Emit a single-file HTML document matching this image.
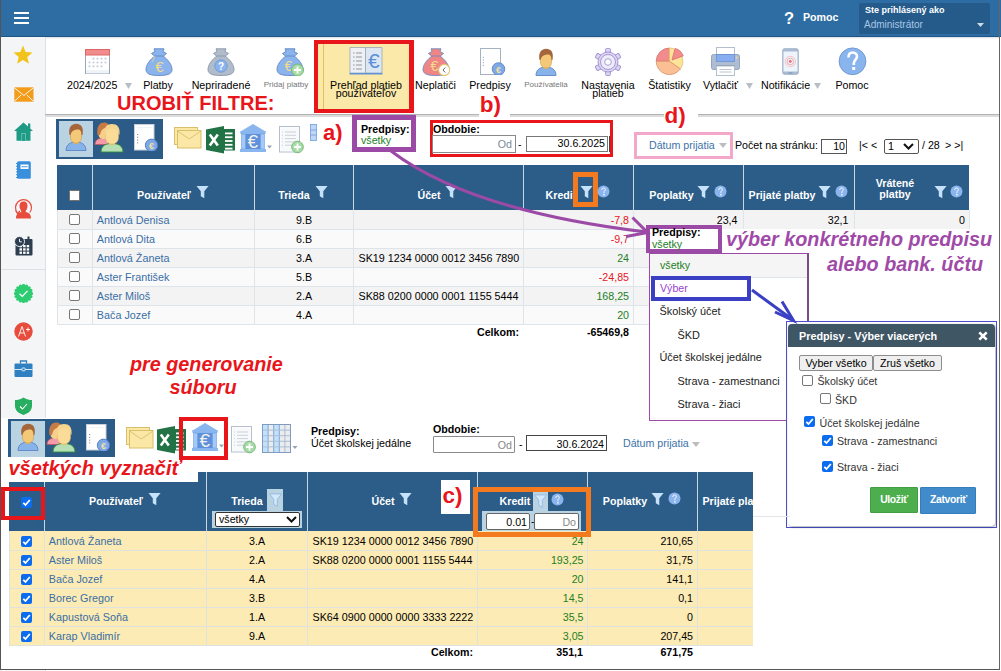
<!DOCTYPE html><html><head><meta charset="utf-8"><style>
html,body{margin:0;padding:0;width:1001px;height:671px;overflow:hidden;background:#fff;position:relative;font-family:"Liberation Sans",sans-serif;}
.t{position:absolute;line-height:1;white-space:nowrap;}
.r{position:absolute;box-sizing:border-box;}
</style></head><body>
<div class="r" style="left:0px;top:0px;width:1001px;height:37px;background:#2d6da3"></div>
<div class="r" style="left:0px;top:36.3px;width:1001px;height:1px;background:#1f5584"></div>
<div class="r" style="left:45px;top:37.3px;width:954px;height:2px;background:linear-gradient(#d8dde3,#fff)"></div>
<div class="r" style="left:13.5px;top:12px;width:15px;height:1.6px;background:#fff"></div>
<div class="r" style="left:13.5px;top:17px;width:15px;height:1.6px;background:#fff"></div>
<div class="r" style="left:13.5px;top:22px;width:15px;height:1.6px;background:#fff"></div>
<div class="t" style="left:784px;top:9.63px;font-size:16.5px;font-weight:bold;color:#fff;font-style:normal;">?</div>
<div class="t" style="left:803px;top:11.97px;font-size:10.67px;font-weight:bold;color:#fff;font-style:normal;">Pomoc</div>
<div class="r" style="left:859px;top:3px;width:131px;height:31px;background:#245b8b;border-radius:2px"></div>
<div class="t" style="left:865px;top:6.38px;font-size:9px;font-weight:bold;color:#fff;font-style:normal;">Ste prihlásený ako</div>
<div class="t" style="left:864px;top:19.54px;font-size:10px;font-weight:normal;color:#a9c6e3;font-style:normal;">Administrátor</div>
<svg class="r" style="left:977px;top:23px" width="7" height="4" viewBox="0 0 7 4"><path d="M0 0L7 0L3.5 4Z" fill="#cfdbe6"/></svg>
<div class="r" style="left:0px;top:37.3px;width:46px;height:634px;background:#f4f5f7;border-right:1px solid #dcdfe3"></div>
<svg class="r" style="left:13px;top:45px" width="20" height="20" viewBox="0 0 20 20"><polygon points="10.00,0.60 12.65,6.96 19.51,7.51 14.28,11.99 15.88,18.69 10.00,15.10 4.12,18.69 5.72,11.99 0.49,7.51 7.35,6.96" fill="#f2c31a"/></svg>
<svg class="r" style="left:13.5px;top:86.5px" width="20" height="15" viewBox="0 0 20 15"><rect x="0.3" y="0.3" width="19.2" height="14.4" fill="#f39c1a"/><path d="M0.5 0.8 L9.9 8.5 L19.3 0.8 M0.5 14.2 L7 8 M19.3 14.2 L12.8 8" stroke="#fff" stroke-width="0.9" fill="none"/></svg>
<svg class="r" style="left:13.5px;top:122px" width="19" height="19" viewBox="0 0 19 19"><path d="M9.5 0.5 L19 9 L16.5 9 L16.5 18.8 L2.5 18.8 L2.5 9 L0 9 Z" fill="#1f9a85"/><rect x="14" y="1.5" width="2.3" height="5" fill="#1f9a85"/><rect x="7.2" y="11" width="4.8" height="7.8" fill="#5fc2b0"/><rect x="8.2" y="12" width="2.8" height="6.8" fill="#1f9a85"/></svg>
<svg class="r" style="left:15.5px;top:160.5px" width="15" height="18" viewBox="0 0 15 18"><rect x="1" y="0.3" width="13.8" height="17.5" rx="1.5" fill="#3a8fdd"/><rect x="4.5" y="3.5" width="8" height="4.5" fill="#fff"/><rect x="5.5" y="5.3" width="6" height="0.9" fill="#3a8fdd"/><rect x="0" y="2.0" width="2" height="1" fill="#3a8fdd"/><rect x="0" y="4.8" width="2" height="1" fill="#3a8fdd"/><rect x="0" y="7.6" width="2" height="1" fill="#3a8fdd"/><rect x="0" y="10.399999999999999" width="2" height="1" fill="#3a8fdd"/><rect x="0" y="13.2" width="2" height="1" fill="#3a8fdd"/><rect x="0" y="16.0" width="2" height="1" fill="#3a8fdd"/></svg>
<svg class="r" style="left:14px;top:197.5px" width="19" height="21" viewBox="0 0 19 21"><path d="M3.2 14.5 A8 8 0 1 1 15.8 14.5" stroke="#e74c3c" stroke-width="1.2" fill="none"/><path d="M1.5 12.5 L3.5 15.5 L6 13" stroke="#e74c3c" stroke-width="1.2" fill="none"/><path d="M9.5 3.5 C12.5 3.5,13.5 5.5,13.5 8 C13.5 10.5,12.3 12,11.7 13 L11.7 14 C15 14.8,17 16,17 20.5 L2 20.5 C2 16,4 14.8,7.3 14 L7.3 13 C6.7 12,5.5 10.5,5.5 8 C5.5 5.5,6.5 3.5,9.5 3.5Z" fill="#e74c3c"/></svg>
<svg class="r" style="left:14px;top:235.5px" width="19" height="20" viewBox="0 0 19 20"><rect x="1.5" y="3" width="17" height="16.5" rx="1" fill="#2c3e50"/><rect x="13.5" y="0.5" width="2" height="4" fill="#2c3e50"/><rect x="5.5" y="9.0" width="2.5" height="2.3" fill="#fff"/><rect x="9.1" y="9.0" width="2.5" height="2.3" fill="#fff"/><rect x="12.7" y="9.0" width="2.5" height="2.3" fill="#fff"/><rect x="5.5" y="12.3" width="2.5" height="2.3" fill="#fff"/><rect x="9.1" y="12.3" width="2.5" height="2.3" fill="#fff"/><rect x="12.7" y="12.3" width="2.5" height="2.3" fill="#fff"/><rect x="5.5" y="15.6" width="2.5" height="2.3" fill="#fff"/><rect x="9.1" y="15.6" width="2.5" height="2.3" fill="#fff"/><rect x="12.7" y="15.6" width="2.5" height="2.3" fill="#fff"/><circle cx="5.5" cy="5.5" r="5" fill="#2c3e50" stroke="#fff" stroke-width="0.9"/><path d="M5.5 2.8V5.8H7.8" stroke="#fff" stroke-width="0.9" fill="none"/></svg>
<svg class="r" style="left:13.5px;top:283.5px" width="19" height="19" viewBox="0 0 19 19"><circle cx="17.5" cy="9.5" r="1.6" fill="#2ecc71"/><circle cx="16.891036260090296" cy="12.561467458920719" r="1.6" fill="#2ecc71"/><circle cx="15.15685424949238" cy="15.15685424949238" r="1.6" fill="#2ecc71"/><circle cx="12.561467458920719" cy="16.891036260090296" r="1.6" fill="#2ecc71"/><circle cx="9.5" cy="17.5" r="1.6" fill="#2ecc71"/><circle cx="6.438532541079282" cy="16.891036260090296" r="1.6" fill="#2ecc71"/><circle cx="3.8431457505076203" cy="15.15685424949238" r="1.6" fill="#2ecc71"/><circle cx="2.108963739909706" cy="12.561467458920719" r="1.6" fill="#2ecc71"/><circle cx="1.5" cy="9.500000000000002" r="1.6" fill="#2ecc71"/><circle cx="2.108963739909705" cy="6.438532541079283" r="1.6" fill="#2ecc71"/><circle cx="3.8431457505076185" cy="3.8431457505076203" r="1.6" fill="#2ecc71"/><circle cx="6.438532541079278" cy="2.108963739909708" r="1.6" fill="#2ecc71"/><circle cx="9.499999999999998" cy="1.5" r="1.6" fill="#2ecc71"/><circle cx="12.56146745892072" cy="2.108963739909707" r="1.6" fill="#2ecc71"/><circle cx="15.15685424949238" cy="3.8431457505076185" r="1.6" fill="#2ecc71"/><circle cx="16.891036260090292" cy="6.438532541079277" r="1.6" fill="#2ecc71"/><circle cx="9.5" cy="9.5" r="8.3" fill="#2ecc71"/><path d="M5.5 9.8 L8.3 12.5 L13.5 6.8" stroke="#fff" stroke-width="1.2" fill="none"/></svg>
<svg class="r" style="left:13.5px;top:321.5px" width="19" height="19" viewBox="0 0 19 19"><circle cx="9.5" cy="9.5" r="9.2" fill="#e74c3c"/><path d="M4.5 14.5 L8 4.5 L11.5 14.5 M5.8 11 H10.2 M12 7.5H16 M14 5.5V9.5" stroke="#fff" stroke-width="0.9" fill="none"/></svg>
<svg class="r" style="left:13.5px;top:360px" width="19" height="18" viewBox="0 0 19 18"><rect x="0.5" y="3.5" width="18" height="13.5" rx="1" fill="#2f80c0"/><path d="M6.5 3.5 V1 H12.5 V3.5" stroke="#2f80c0" stroke-width="1.3" fill="none"/><path d="M0.5 9.5H18.5" stroke="#fff" stroke-width="0.8"/><rect x="7.8" y="8" width="3.4" height="2.8" rx="0.8" fill="#2f80c0" stroke="#fff" stroke-width="0.8"/></svg>
<svg class="r" style="left:14.5px;top:397px" width="18" height="18" viewBox="0 0 18 18"><path d="M8.5 0.5 C11.5 2.5,14.5 3,17 3 L17 9 C17 13.5,13 16.5,8.5 18 C4 16.5,0 13.5,0 9 L0 3 C2.5 3,5.5 2.5,8.5 0.5Z" fill="#27ae60"/><path d="M5 9.5 L7.5 12 L12 7" stroke="#fff" stroke-width="1.1" fill="none"/></svg>
<div class="r" style="left:0px;top:268.5px;width:45px;height:1px;background:#dde0e4"></div>
<div class="r" style="left:45px;top:113.8px;width:954px;height:1.6px;background:#b4b4b4"></div>
<div class="r" style="left:45px;top:115.4px;width:954px;height:1.6px;background:#dcdcdc"></div>
<div class="t" style="left:67px;top:79.97px;font-size:10.67px;font-weight:normal;color:#000;font-style:normal;">2024/2025</div>
<svg class="r" style="left:125px;top:83px" width="8" height="6" viewBox="0 0 8 6"><path d="M0 0L7 0L3.5 6Z" fill="#b8bec6"/></svg>
<div class="t" style="left:-42px;width:400px;text-align:center;top:79.97px;font-size:10.67px;font-weight:normal;color:#000;font-style:normal;">Platby</div>
<div class="t" style="left:21px;width:400px;text-align:center;top:79.97px;font-size:10.67px;font-weight:normal;color:#000;font-style:normal;">Nepriradené</div>
<div class="t" style="left:86px;width:400px;text-align:center;top:81.14px;font-size:8.1px;font-weight:normal;color:#777;font-style:normal;">Pridaj platby</div>
<div class="r" style="left:314px;top:40px;width:100px;height:73px;border:4px solid #e8151b;border-right-width:5px;background:#fbe9a9"></div>
<div class="r" style="left:323px;top:44px;width:1px;height:65px;background:#e6c15a"></div>
<div class="t" style="left:166px;width:400px;text-align:center;top:79.57px;font-size:10.67px;font-weight:normal;color:#000;font-style:normal;">Prehľad platieb</div>
<div class="t" style="left:166px;width:400px;text-align:center;top:87.77px;font-size:10.67px;font-weight:normal;color:#000;font-style:normal;">používateľov</div>
<div class="t" style="left:235.5px;width:400px;text-align:center;top:79.97px;font-size:10.67px;font-weight:normal;color:#000;font-style:normal;">Neplatiči</div>
<div class="t" style="left:290px;width:400px;text-align:center;top:79.97px;font-size:10.67px;font-weight:normal;color:#000;font-style:normal;">Predpisy</div>
<div class="t" style="left:346px;width:400px;text-align:center;top:81.23px;font-size:8px;font-weight:normal;color:#777;font-style:normal;">Používatelia</div>
<div class="t" style="left:408px;width:400px;text-align:center;top:79.57px;font-size:10.67px;font-weight:normal;color:#000;font-style:normal;">Nastavenia</div>
<div class="t" style="left:408px;width:400px;text-align:center;top:87.77px;font-size:10.67px;font-weight:normal;color:#000;font-style:normal;">platieb</div>
<div class="t" style="left:469.5px;width:400px;text-align:center;top:79.77px;font-size:10.67px;font-weight:normal;color:#000;font-style:normal;">Štatistiky</div>
<div class="t" style="left:703px;top:79.97px;font-size:10.67px;font-weight:normal;color:#000;font-style:normal;">Vytlačiť</div>
<svg class="r" style="left:746px;top:83px" width="7" height="6" viewBox="0 0 7 6"><path d="M0 0L7 0L3.5 6Z" fill="#b8bec6"/></svg>
<div class="t" style="left:761px;top:79.97px;font-size:10.67px;font-weight:normal;color:#000;font-style:normal;">Notifikácie</div>
<svg class="r" style="left:814px;top:83px" width="7" height="6" viewBox="0 0 7 6"><path d="M0 0L7 0L3.5 6Z" fill="#b8bec6"/></svg>
<div class="t" style="left:652px;width:400px;text-align:center;top:79.97px;font-size:10.67px;font-weight:normal;color:#000;font-style:normal;">Pomoc</div>
<div class="t" style="left:117px;top:93.07px;font-size:20px;font-weight:bold;color:#e8151b;font-style:normal;">UROBIŤ FILTRE:</div>
<div class="r" style="left:478.5px;top:94px;width:31.5px;height:23px;background:#fff"></div>
<div class="t" style="left:479.8px;top:93.75px;font-size:22.5px;font-weight:bold;color:#e8151b;font-style:normal;">b)</div>
<div class="r" style="left:663.5px;top:104px;width:34.5px;height:13px;background:#fff"></div>
<div class="t" style="left:664.5px;top:104.65px;font-size:22.5px;font-weight:bold;color:#e8151b;font-style:normal;">d)</div>
<div class="t" style="left:323px;top:122.38px;font-size:22px;font-weight:bold;color:#e8151b;font-style:normal;">a)</div>
<div class="r" style="left:56px;top:119px;width:107px;height:40px;background:#2b5b86"></div>
<div class="r" style="left:59px;top:121px;width:34px;height:36px;background:#b9d3e3"></div>
<div class="r" style="left:352px;top:115px;width:64px;height:37px;border:5px solid #9b4aa6;background:#fff"></div>
<div class="t" style="left:361px;top:123.67px;font-size:10.67px;font-weight:bold;color:#000;font-style:normal;">Predpisy:</div>
<div class="t" style="left:361px;top:134.97px;font-size:10.67px;font-weight:normal;color:#22801f;font-style:normal;">všetky</div>
<div class="r" style="left:430px;top:120px;width:183px;height:37px;border:3px solid #e8151b"></div>
<div class="t" style="left:433px;top:123.97px;font-size:10.67px;font-weight:bold;color:#000;font-style:normal;">Obdobie:</div>
<div class="r" style="left:432px;top:135px;width:84px;height:18px;border:1px solid #8a8a8a;background:#fff"></div>
<div class="t" style="left:112px;width:400px;text-align:right;top:138.97px;font-size:10.67px;font-weight:normal;color:#7b8a99;font-style:normal;">Od</div>
<div class="t" style="left:518px;top:138.97px;font-size:10.67px;font-weight:normal;color:#000;font-style:normal;">-</div>
<div class="r" style="left:526px;top:136px;width:82px;height:16px;border:1px solid #777;background:#fff"></div>
<div class="r" style="left:608.5px;top:136px;width:1.5px;height:16px;background:#444"></div>
<div class="t" style="left:205px;width:400px;text-align:right;top:138.47px;font-size:10.67px;font-weight:normal;color:#000;font-style:normal;">30.6.2025</div>
<div class="r" style="left:634px;top:132px;width:99px;height:27px;border:3px solid #f3a7c9"></div>
<div class="t" style="left:649px;top:140.47px;font-size:10.67px;font-weight:normal;color:#3e72a8;font-style:normal;">Dátum prijatia</div>
<svg class="r" style="left:719px;top:143px" width="8" height="5" viewBox="0 0 8 5"><path d="M0 0L8 0L4 5Z" fill="#bdbdbd"/></svg>
<div class="t" style="left:735px;top:140.47px;font-size:10.67px;font-weight:normal;color:#000;font-style:normal;">Počet na stránku:</div>
<div class="r" style="left:821px;top:139px;width:26px;height:15px;border:1px solid #555;background:#fff"></div>
<div class="t" style="left:445px;width:400px;text-align:right;top:140.97px;font-size:10.67px;font-weight:normal;color:#000;font-style:normal;">10</div>
<div class="t" style="left:859px;top:140.47px;font-size:10.67px;font-weight:normal;color:#000;font-style:normal;">|&lt; &lt;</div>
<div class="r" style="left:884px;top:139px;width:35px;height:15px;border:1px solid #555;background:#fff;border-radius:2px"></div>
<div class="t" style="left:888px;top:140.97px;font-size:10.67px;font-weight:normal;color:#000;font-style:normal;">1</div>
<svg class="r" style="left:903px;top:143px" width="11" height="7" viewBox="0 0 11 7"><path d="M1 1L5.5 5.5L10 1" stroke="#111" stroke-width="2" fill="none"/></svg>
<div class="t" style="left:922px;top:140.47px;font-size:10.67px;font-weight:normal;color:#000;font-style:normal;">/ 28</div>
<div class="t" style="left:945px;top:140.47px;font-size:10.67px;font-weight:normal;color:#000;font-style:normal;">&gt; &gt;|</div>
<div class="r" style="left:57px;top:165px;width:912px;height:45px;background:#2c5d88"></div>
<div class="r" style="left:92px;top:165px;width:1px;height:45px;background:#c9d6e2"></div>
<div class="r" style="left:254px;top:165px;width:1px;height:45px;background:#c9d6e2"></div>
<div class="r" style="left:353px;top:165px;width:1px;height:45px;background:#c9d6e2"></div>
<div class="r" style="left:523px;top:165px;width:1px;height:45px;background:#c9d6e2"></div>
<div class="r" style="left:633px;top:165px;width:1px;height:45px;background:#c9d6e2"></div>
<div class="r" style="left:743px;top:165px;width:1px;height:45px;background:#c9d6e2"></div>
<div class="r" style="left:854px;top:165px;width:1px;height:45px;background:#c9d6e2"></div>
<div class="r" style="left:57px;top:210px;width:912px;height:19px;background:#f3f3f3"></div>
<div class="r" style="left:57px;top:229px;width:912px;height:19px;background:#fafafa"></div>
<div class="r" style="left:57px;top:248px;width:912px;height:19px;background:#f3f3f3"></div>
<div class="r" style="left:57px;top:267px;width:912px;height:19px;background:#fafafa"></div>
<div class="r" style="left:57px;top:286px;width:912px;height:19px;background:#f3f3f3"></div>
<div class="r" style="left:57px;top:305px;width:912px;height:19px;background:#fafafa"></div>
<div class="r" style="left:57px;top:229px;width:912px;height:1px;background:#dde5eb"></div>
<div class="r" style="left:57px;top:248px;width:912px;height:1px;background:#dde5eb"></div>
<div class="r" style="left:57px;top:267px;width:912px;height:1px;background:#dde5eb"></div>
<div class="r" style="left:57px;top:286px;width:912px;height:1px;background:#dde5eb"></div>
<div class="r" style="left:57px;top:305px;width:912px;height:1px;background:#dde5eb"></div>
<div class="r" style="left:57px;top:324px;width:912px;height:1px;background:#dde5eb"></div>
<div class="r" style="left:57px;top:210px;width:1px;height:114px;background:#dde5eb"></div>
<div class="r" style="left:92px;top:210px;width:1px;height:114px;background:#dde5eb"></div>
<div class="r" style="left:254px;top:210px;width:1px;height:114px;background:#dde5eb"></div>
<div class="r" style="left:353px;top:210px;width:1px;height:114px;background:#dde5eb"></div>
<div class="r" style="left:523px;top:210px;width:1px;height:114px;background:#dde5eb"></div>
<div class="r" style="left:633px;top:210px;width:1px;height:114px;background:#dde5eb"></div>
<div class="r" style="left:743px;top:210px;width:1px;height:114px;background:#dde5eb"></div>
<div class="r" style="left:854px;top:210px;width:1px;height:114px;background:#dde5eb"></div>
<div class="r" style="left:969px;top:210px;width:1px;height:114px;background:#dde5eb"></div>
<div class="r" style="left:69.4px;top:190.3px;width:10.4px;height:10.5px;background:#fff;border:1px solid #7a716a;border-radius:1.5px"></div>
<div class="t" style="left:-36px;width:400px;text-align:center;top:189.97px;font-size:10.67px;font-weight:bold;color:#fff;font-style:normal;">Používateľ</div>
<div class="t" style="left:94px;width:400px;text-align:center;top:189.97px;font-size:10.67px;font-weight:bold;color:#fff;font-style:normal;">Trieda</div>
<div class="t" style="left:229px;width:400px;text-align:center;top:189.97px;font-size:10.67px;font-weight:bold;color:#fff;font-style:normal;">Účet</div>
<div class="t" style="left:361px;width:400px;text-align:center;top:189.97px;font-size:10.67px;font-weight:bold;color:#fff;font-style:normal;">Kredit</div>
<div class="t" style="left:471.5px;width:400px;text-align:center;top:189.97px;font-size:10.67px;font-weight:bold;color:#fff;font-style:normal;">Poplatky</div>
<div class="t" style="left:582px;width:400px;text-align:center;top:189.97px;font-size:10.67px;font-weight:bold;color:#fff;font-style:normal;">Prijaté platby</div>
<div class="t" style="left:695px;width:400px;text-align:center;top:177.97px;font-size:10.67px;font-weight:bold;color:#fff;font-style:normal;">Vrátené</div>
<div class="t" style="left:695px;width:400px;text-align:center;top:189.47px;font-size:10.67px;font-weight:bold;color:#fff;font-style:normal;">platby</div>
<div class="r" style="left:573px;top:172px;width:25px;height:34.6px;border:5px solid #f47a20"></div>
<div class="r" style="left:69px;top:214px;width:11px;height:11px;border:1px solid #777;border-radius:2px;background:#fff"></div>
<div class="t" style="left:96.8px;top:214.86px;font-size:10.8px;font-weight:normal;color:#3a6ea5;font-style:normal;">Antlová Denisa</div>
<div class="t" style="left:104px;width:400px;text-align:center;top:214.97px;font-size:10.67px;font-weight:normal;color:#000;font-style:normal;">9.B</div>
<div class="t" style="left:229px;width:400px;text-align:right;top:214.97px;font-size:10.67px;font-weight:normal;color:#e8151b;font-style:normal;">-7,8</div>
<div class="r" style="left:69px;top:233px;width:11px;height:11px;border:1px solid #777;border-radius:2px;background:#fff"></div>
<div class="t" style="left:96.8px;top:233.86px;font-size:10.8px;font-weight:normal;color:#3a6ea5;font-style:normal;">Antlová Dita</div>
<div class="t" style="left:104px;width:400px;text-align:center;top:233.97px;font-size:10.67px;font-weight:normal;color:#000;font-style:normal;">6.B</div>
<div class="t" style="left:229px;width:400px;text-align:right;top:233.97px;font-size:10.67px;font-weight:normal;color:#e8151b;font-style:normal;">-9,7</div>
<div class="r" style="left:69px;top:252px;width:11px;height:11px;border:1px solid #777;border-radius:2px;background:#fff"></div>
<div class="t" style="left:96.8px;top:252.86px;font-size:10.8px;font-weight:normal;color:#3a6ea5;font-style:normal;">Antlová Žaneta</div>
<div class="t" style="left:104px;width:400px;text-align:center;top:252.97px;font-size:10.67px;font-weight:normal;color:#000;font-style:normal;">3.A</div>
<div class="t" style="left:358.5px;top:252.89px;font-size:10.76px;font-weight:normal;color:#000;font-style:normal;">SK19 1234 0000 0012 3456 7890</div>
<div class="t" style="left:229px;width:400px;text-align:right;top:252.97px;font-size:10.67px;font-weight:normal;color:#22801f;font-style:normal;">24</div>
<div class="r" style="left:69px;top:271px;width:11px;height:11px;border:1px solid #777;border-radius:2px;background:#fff"></div>
<div class="t" style="left:96.8px;top:271.86px;font-size:10.8px;font-weight:normal;color:#3a6ea5;font-style:normal;">Aster František</div>
<div class="t" style="left:104px;width:400px;text-align:center;top:271.97px;font-size:10.67px;font-weight:normal;color:#000;font-style:normal;">5.B</div>
<div class="t" style="left:229px;width:400px;text-align:right;top:271.97px;font-size:10.67px;font-weight:normal;color:#e8151b;font-style:normal;">-24,85</div>
<div class="r" style="left:69px;top:290px;width:11px;height:11px;border:1px solid #777;border-radius:2px;background:#fff"></div>
<div class="t" style="left:96.8px;top:290.86px;font-size:10.8px;font-weight:normal;color:#3a6ea5;font-style:normal;">Aster Miloš</div>
<div class="t" style="left:104px;width:400px;text-align:center;top:290.97px;font-size:10.67px;font-weight:normal;color:#000;font-style:normal;">2.A</div>
<div class="t" style="left:358.5px;top:290.89px;font-size:10.76px;font-weight:normal;color:#000;font-style:normal;">SK88 0200 0000 0001 1155 5444</div>
<div class="t" style="left:229px;width:400px;text-align:right;top:290.97px;font-size:10.67px;font-weight:normal;color:#22801f;font-style:normal;">168,25</div>
<div class="r" style="left:69px;top:309px;width:11px;height:11px;border:1px solid #777;border-radius:2px;background:#fff"></div>
<div class="t" style="left:96.8px;top:309.86px;font-size:10.8px;font-weight:normal;color:#3a6ea5;font-style:normal;">Bača Jozef</div>
<div class="t" style="left:104px;width:400px;text-align:center;top:309.97px;font-size:10.67px;font-weight:normal;color:#000;font-style:normal;">4.A</div>
<div class="t" style="left:229px;width:400px;text-align:right;top:309.97px;font-size:10.67px;font-weight:normal;color:#22801f;font-style:normal;">20</div>
<div class="t" style="left:337.5px;width:400px;text-align:right;top:214.97px;font-size:10.67px;font-weight:normal;color:#000;font-style:normal;">23,4</div>
<div class="t" style="left:448.5px;width:400px;text-align:right;top:214.97px;font-size:10.67px;font-weight:normal;color:#000;font-style:normal;">32,1</div>
<div class="t" style="left:565px;width:400px;text-align:right;top:214.97px;font-size:10.67px;font-weight:normal;color:#000;font-style:normal;">0</div>
<div class="t" style="left:119px;width:400px;text-align:right;top:326.97px;font-size:10.67px;font-weight:bold;color:#000;font-style:normal;">Celkom:</div>
<div class="t" style="left:229px;width:400px;text-align:right;top:326.97px;font-size:10.67px;font-weight:bold;color:#000;font-style:normal;">-65469,8</div>
<svg class="r" style="left:85px;top:49px" width="25" height="25" viewBox="0 0 25 25"><rect x="0.5" y="0.5" width="24" height="24" fill="#fff" stroke="#98a8b8"/><rect x="0.5" y="0.5" width="24" height="5.5" fill="#f28b8b" stroke="#d66"/><rect x="1" y="21" width="23" height="3.5" fill="#eef3f8"/><circle cx="8.5" cy="9.7" r="1.1" fill="#c5d0dc"/><circle cx="12.5" cy="9.7" r="1.1" fill="#c5d0dc"/><circle cx="16.5" cy="9.7" r="1.1" fill="#c5d0dc"/><circle cx="20.5" cy="9.7" r="1.1" fill="#c5d0dc"/><circle cx="4.5" cy="13.5" r="1.1" fill="#c5d0dc"/><circle cx="8.5" cy="13.5" r="1.1" fill="#c5d0dc"/><circle cx="12.5" cy="13.5" r="1.1" fill="#c5d0dc"/><circle cx="16.5" cy="13.5" r="1.1" fill="#c5d0dc"/><circle cx="20.5" cy="13.5" r="1.1" fill="#c5d0dc"/><circle cx="4.5" cy="17.299999999999997" r="1.1" fill="#c5d0dc"/><circle cx="8.5" cy="17.299999999999997" r="1.1" fill="#c5d0dc"/><circle cx="12.5" cy="17.299999999999997" r="1.1" fill="#c5d0dc"/><circle cx="16.5" cy="17.299999999999997" r="1.1" fill="#c5d0dc"/></svg>
<svg class="r" style="left:144.5px;top:47.5px" width="28" height="28" viewBox="0 0 28 28"><path d="M10.5 7.5 C4.5 12,0.8 17,1 22 C1.3 26.5,7 27.5,14 27.5 C21 27.5,26.7 26.5,27 22 C27.2 17,23.5 12,17.5 7.5 Z" fill="#8cb4ec" stroke="#5f86c4" stroke-width="0.9"/><path d="M9 0.8 L19 0.8 L18 3.5 L21.5 5.5 L18.5 8 L9.5 8 L6.5 5.5 L10 3.5 Z" fill="#8cb4ec" stroke="#5f86c4" stroke-width="0.9"/><text x="14.3" y="23.5" font-family="Liberation Sans" font-size="15" font-weight="normal" fill="#f5dc8a" text-anchor="middle">€</text><path d="M10 8 L7 14" stroke="#e8d49a" stroke-width="0.8"/></svg>
<svg class="r" style="left:206.5px;top:47.5px" width="28" height="28" viewBox="0 0 28 28"><path d="M10.5 7.5 C4.5 12,0.8 17,1 22 C1.3 26.5,7 27.5,14 27.5 C21 27.5,26.7 26.5,27 22 C27.2 17,23.5 12,17.5 7.5 Z" fill="#b1bccb" stroke="#8796ab" stroke-width="0.9"/><path d="M9 0.8 L19 0.8 L18 3.5 L21.5 5.5 L18.5 8 L9.5 8 L6.5 5.5 L10 3.5 Z" fill="#b1bccb" stroke="#8796ab" stroke-width="0.9"/><circle cx="14" cy="18" r="6.2" fill="#8ab4ed" stroke="#6b95d3" stroke-width="0.8"/><text x="14" y="22" font-family="Liberation Sans" font-size="10" font-weight="bold" fill="#fff" text-anchor="middle">?</text></svg>
<svg class="r" style="left:276px;top:47.5px" width="28" height="28" viewBox="0 0 28 28"><path d="M10.5 7.5 C4.5 12,0.8 17,1 22 C1.3 26.5,7 27.5,14 27.5 C21 27.5,26.7 26.5,27 22 C27.2 17,23.5 12,17.5 7.5 Z" fill="#8cb4ec" stroke="#5f86c4" stroke-width="0.9"/><path d="M9 0.8 L19 0.8 L18 3.5 L21.5 5.5 L18.5 8 L9.5 8 L6.5 5.5 L10 3.5 Z" fill="#8cb4ec" stroke="#5f86c4" stroke-width="0.9"/><text x="12.5" y="23" font-family="Liberation Sans" font-size="14" font-weight="normal" fill="#f5dc8a" text-anchor="middle">€</text><circle cx="21.5" cy="22" r="6" fill="#a8dba8" stroke="#6db46d" stroke-width="0.9"/><path d="M21.5 18.5V25.5M18 22H25" stroke="#fff" stroke-width="1.8"/></svg>
<svg class="r" style="left:349px;top:47px" width="34" height="28" viewBox="0 0 34 28"><path d="M1 0.5 H16.5 V26 H1 Z" fill="#eef0f3" stroke="#9aa7b6" stroke-width="0.8"/><path d="M16.5 0.5 H33 V26 H16.5 Z" fill="#dce7f4" stroke="#9aa7b6" stroke-width="0.8"/><path d="M0.5 26 H33.5 V27.5 H0.5Z" fill="#5f93d8"/><path d="M4 6 H5.5 M7 6 H13" stroke="#8d98a6" stroke-width="1"/><path d="M4 10 H5.5 M7 10 H13" stroke="#8d98a6" stroke-width="1"/><path d="M4 14 H5.5 M7 14 H13" stroke="#8d98a6" stroke-width="1"/><path d="M4 18 H5.5 M7 18 H13" stroke="#8d98a6" stroke-width="1"/><path d="M4 22 H5.5 M7 22 H13" stroke="#8d98a6" stroke-width="1"/><text x="24.8" y="21.3" font-family="Liberation Sans" font-size="21" font-weight="normal" fill="#5b8fd6" text-anchor="middle">€</text></svg>
<svg class="r" style="left:421.5px;top:47.5px" width="28" height="28" viewBox="0 0 28 28"><path d="M10.5 7.5 C4.5 12,0.8 17,1 22 C1.3 26.5,7 27.5,14 27.5 C21 27.5,26.7 26.5,27 22 C27.2 17,23.5 12,17.5 7.5 Z" fill="#f08585" stroke="#6e8cc0" stroke-width="0.9"/><path d="M9 0.8 L19 0.8 L18 3.5 L21.5 5.5 L18.5 8 L9.5 8 L6.5 5.5 L10 3.5 Z" fill="#f08585" stroke="#6e8cc0" stroke-width="0.9"/><text x="12.5" y="23" font-family="Liberation Sans" font-size="14" font-weight="normal" fill="#f5dc8a" text-anchor="middle">€</text><circle cx="22.2" cy="22" r="5.6" fill="#fff" stroke="#e3c46a" stroke-width="1.1"/><path d="M23.3 19.5 L21 22 L23.3 24.5" stroke="#555" stroke-width="0.9" fill="none"/></svg>
<svg class="r" style="left:480px;top:48px" width="26" height="27" viewBox="0 0 26 27"><rect x="0.5" y="0.5" width="20" height="26" fill="#fff" stroke="#a4b2c1"/><rect x="2.8" y="8.8" width="1" height="1" fill="#8895a5"/><rect x="2.8" y="11.5" width="1" height="1" fill="#8895a5"/><rect x="2.8" y="14.200000000000001" width="1" height="1" fill="#8895a5"/><rect x="2.8" y="16.900000000000002" width="1" height="1" fill="#8895a5"/><circle cx="18.5" cy="21" r="6.3" fill="#7fa9e6" stroke="#5f86c4" stroke-width="0.9"/><text x="18.5" y="25" font-family="Liberation Sans" font-size="9" font-weight="bold" fill="#f5e3a0" text-anchor="middle">€</text></svg>
<svg class="r" style="left:534px;top:47.5px" width="25" height="29" viewBox="0 0 25 29"><g transform="scale(1.0)"><path d="M2 27.5 C2 21,7 19,12 19 C17 19,22 21,22 27.5 Z" fill="#86b3ea" stroke="#5f86c4" stroke-width="0.9"/><path d="M9 16 L9 19.5 C10 21.5,14 21.5,15 19.5 L15 16Z" fill="#e2b060"/><path d="M6.5 9 C6.5 3,17.5 3,17.5 9 L17.5 14 C17.5 18.5,14.5 20,12 20 C9.5 20,6.5 18.5,6.5 14Z" fill="#f3c978" stroke="#c99a4a" stroke-width="0.6"/><path d="M5.5 12 C4 4,8 0.8,12 0.8 C17 0.8,20 4,18.5 12 L17.5 12 C17.5 8,16 6.5,14 6.5 C11 6.5,8 7,6.5 12Z" fill="#a5663c"/></g></svg>
<svg class="r" style="left:594.5px;top:47.5px" width="26" height="28" viewBox="0 0 26 28"><rect x="-2.4" y="-13.6" width="4.8" height="6" rx="1" fill="#ddd5f3" stroke="#9f90d0" stroke-width="0.9" transform="translate(13 14) rotate(0)"/><rect x="-2.4" y="-13.6" width="4.8" height="6" rx="1" fill="#ddd5f3" stroke="#9f90d0" stroke-width="0.9" transform="translate(13 14) rotate(60)"/><rect x="-2.4" y="-13.6" width="4.8" height="6" rx="1" fill="#ddd5f3" stroke="#9f90d0" stroke-width="0.9" transform="translate(13 14) rotate(120)"/><rect x="-2.4" y="-13.6" width="4.8" height="6" rx="1" fill="#ddd5f3" stroke="#9f90d0" stroke-width="0.9" transform="translate(13 14) rotate(180)"/><rect x="-2.4" y="-13.6" width="4.8" height="6" rx="1" fill="#ddd5f3" stroke="#9f90d0" stroke-width="0.9" transform="translate(13 14) rotate(240)"/><rect x="-2.4" y="-13.6" width="4.8" height="6" rx="1" fill="#ddd5f3" stroke="#9f90d0" stroke-width="0.9" transform="translate(13 14) rotate(300)"/><circle cx="13" cy="14" r="10" fill="#ddd5f3" stroke="#9f90d0" stroke-width="0.9"/><circle cx="13" cy="14" r="9" fill="#ddd5f3"/><circle cx="13" cy="14" r="7.5" fill="#efecfa" stroke="#9f90d0" stroke-width="0.9"/><circle cx="13" cy="14" r="3.3" fill="#fff" stroke="#9f90d0" stroke-width="0.9"/></svg>
<svg class="r" style="left:655px;top:47px" width="30" height="29" viewBox="0 0 30 29"><path d="M14.5 14.3 L1.20 14.30 A13.3 13.3 0 0 1 14.50 1.00 Z" fill="#f28b8b" stroke="#d9706f" stroke-width="0.8"/><path d="M14.5 14.3 L14.50 1.00 A13.3 13.3 0 0 1 25.39 21.93 Z" fill="#fbe49a" stroke="#dfc268" stroke-width="0.8"/><path d="M14.5 14.3 L25.39 21.93 A13.3 13.3 0 0 1 1.20 14.30 Z" fill="#fbbf94" stroke="#d9906a" stroke-width="0.8"/><path d="M17 13 L20.11 1.41 A12 12 0 0 1 28.28 8.90 Z" fill="#f28b8b" stroke="#d9706f" stroke-width="0.8"/></svg>
<svg class="r" style="left:711px;top:47px" width="30" height="29" viewBox="0 0 30 29"><rect x="5.5" y="0.5" width="18" height="8" fill="#fff" stroke="#b3bfcc"/><rect x="0.5" y="7.5" width="28" height="15" rx="2" fill="#aebdd2" stroke="#93a5bd"/><rect x="5.5" y="7.5" width="18" height="7" fill="#86aef0" stroke="#6a91d0" stroke-width="0.8"/><rect x="5" y="18" width="19" height="2" fill="#7d8fa8"/><rect x="5.5" y="19" width="18" height="9.5" fill="#fff" stroke="#b3bfcc"/><path d="M8.5 22.5H20.5M8.5 25H20.5" stroke="#b3bfcc" stroke-width="0.9"/><circle cx="25.5" cy="10.5" r="0.9" fill="#f5dc8a"/></svg>
<svg class="r" style="left:782px;top:48px" width="17" height="27" viewBox="0 0 17 27"><rect x="0.5" y="0.5" width="16" height="26" rx="2.5" fill="#a9bbd3" stroke="#98abc4" stroke-width="0.6"/><rect x="1.5" y="3.5" width="14" height="20" fill="#eef4fb"/><circle cx="8.3" cy="13.5" r="5.2" fill="none" stroke="#f5a3a3" stroke-width="0.6"/><circle cx="8.3" cy="13.5" r="3.3" fill="none" stroke="#f08a8a" stroke-width="0.7"/><circle cx="8.3" cy="13.5" r="1.4" fill="#ec6b6b"/><rect x="6.5" y="24.5" width="4" height="1" fill="#7d8fa8"/></svg>
<svg class="r" style="left:838px;top:47px" width="29" height="29" viewBox="0 0 29 29"><circle cx="14.5" cy="14.3" r="13.4" fill="#8ab4ed" stroke="#6a94d0" stroke-width="0.9"/><path d="M10.5 10.5 C10.5 7,12.5 5.5,14.7 5.5 C17.3 5.5,19 7.3,19 9.6 C19 12.5,15.8 13,15.8 16.5 L15.8 18" stroke="#fff" stroke-width="2.6" fill="none"/><rect x="14.2" y="20" width="3" height="2.9" fill="#fff"/></svg>
<svg class="r" style="left:63.5px;top:123px" width="25" height="29" viewBox="0 0 25 29"><g transform="scale(1.0)"><path d="M2 27.5 C2 21,7 19,12 19 C17 19,22 21,22 27.5 Z" fill="#86b3ea" stroke="#5f86c4" stroke-width="0.9"/><path d="M9 16 L9 19.5 C10 21.5,14 21.5,15 19.5 L15 16Z" fill="#e2b060"/><path d="M6.5 9 C6.5 3,17.5 3,17.5 9 L17.5 14 C17.5 18.5,14.5 20,12 20 C9.5 20,6.5 18.5,6.5 14Z" fill="#f3c978" stroke="#c99a4a" stroke-width="0.6"/><path d="M5.5 12 C4 4,8 0.8,12 0.8 C17 0.8,20 4,18.5 12 L17.5 12 C17.5 8,16 6.5,14 6.5 C11 6.5,8 7,6.5 12Z" fill="#a5663c"/></g></svg>
<svg class="r" style="left:94px;top:122px" width="31" height="31" viewBox="0 0 31 31"><path d="M1 22.5 C1 17.5,5 16,9.5 16 C14 16,17 17.5,17 22.5Z" fill="#f29aa8" stroke="#c4556a" stroke-width="0.9"/><path d="M4.5 8 C4.5 2,14 2,14 8 L14 12 C14 15.5,12 17,9.3 17 C6.5 17,4.5 15.5,4.5 12Z" fill="#f6cf8a"/><path d="M3.5 13 C2 3,7 0.5,10 0.5 C13 0.5,15.5 2,15.5 7 L12 6 C9 6,7 8,6 13Z" fill="#c87a45"/><path d="M7 30 C7 23.5,12 21.5,18 21.5 C24 21.5,29 23.5,29 30Z" fill="#b6e0b4" stroke="#2e8b3e" stroke-width="0.9"/><path d="M15 18.5 L15 22 C16 23.5,20 23.5,21 22 L21 18.5Z" fill="#e8c070"/><path d="M11.5 10 C11.5 3.5,24.5 3.5,24.5 10 L24.5 15 C24.5 20,21 22,18 22 C15 22,11.5 20,11.5 15Z" fill="#fbdb98" stroke="#e0b860" stroke-width="0.5"/><path d="M10.5 13 C9.5 5,13 2,18 2 C23 2,26.5 5,25.5 13 L24.5 12 C24.5 8,22 7,18 7 C14 7,12 8,11.5 13Z" fill="#f5d48e"/></svg>
<svg class="r" style="left:134px;top:124px" width="27" height="27" viewBox="0 0 27 27"><rect x="0.5" y="0.5" width="19.5" height="25.5" fill="#fff" stroke="#c9d1da"/><path d="M3 3.5H18" stroke="#eef0f3" stroke-width="0.8"/><rect x="3" y="10.0" width="1.2" height="1" fill="#7d8a99"/><rect x="3" y="12.8" width="1.2" height="1" fill="#7d8a99"/><rect x="3" y="15.6" width="1.2" height="1" fill="#7d8a99"/><rect x="3" y="18.4" width="1.2" height="1" fill="#7d8a99"/><circle cx="17.5" cy="21.3" r="6.2" fill="#7fa9e6" stroke="#4d78c0" stroke-width="0.9"/><text x="17.5" y="25.3" font-family="Liberation Sans" font-size="9" font-weight="bold" fill="#f5e3a0" text-anchor="middle">€</text></svg>
<svg class="r" style="left:174px;top:126.5px" width="28" height="22" viewBox="0 0 28 22"><rect x="0.5" y="0.5" width="23" height="17" fill="#fbe8a6" stroke="#d9bf6a"/><rect x="3.5" y="3.5" width="23.5" height="17.5" fill="#fbe8a6" stroke="#d9bf6a"/><path d="M3.5 4 L15.2 12 L27 4" stroke="#d9bf6a" stroke-width="0.9" fill="none"/></svg>
<svg class="r" style="left:205.5px;top:125.5px" width="30" height="28" viewBox="0 0 30 28"><path d="M0 3.5 L18 0 L18 27.5 L0 24Z" fill="#217346"/><rect x="16" y="3" width="13" height="21.5" fill="#217346"/><rect x="19" y="6.5" width="7.5" height="1.8" fill="#fff"/><rect x="19" y="10.3" width="7.5" height="1.8" fill="#fff"/><rect x="19" y="14.1" width="7.5" height="1.8" fill="#fff"/><rect x="19" y="17.9" width="7.5" height="1.8" fill="#fff"/><rect x="19" y="21.7" width="7.5" height="1.8" fill="#fff"/><path d="M3.8 8.5 L11.8 19.5 M11.8 8.5 L3.8 19.5" stroke="#fff" stroke-width="2.6"/></svg>
<svg class="r" style="left:240px;top:123.5px" width="33" height="29" viewBox="0 0 33 29"><path d="M13 0.5 L25.5 8 L0.5 8Z" fill="#8ab6f0" stroke="#8ab6f0" stroke-linejoin="round"/><rect x="0.5" y="7" width="25" height="3" fill="#8ab6f0"/><rect x="1.5" y="10" width="4" height="15" fill="#a4c8f7" stroke="#6f9ee0" stroke-width="0.6"/><rect x="20.5" y="10" width="4" height="15" fill="#a4c8f7" stroke="#6f9ee0" stroke-width="0.6"/><rect x="5.5" y="10" width="15" height="15" fill="#5f90dc"/><rect x="0" y="25" width="26" height="3" fill="#8ab6f0"/><text x="12.9" y="24.2" font-family="Liberation Sans" font-size="19" font-weight="normal" fill="#f2f2ea" text-anchor="middle">€</text><path d="M27 21.5H32L29.5 24.5Z" fill="#9aa3ad"/></svg>
<svg class="r" style="left:278.5px;top:126px" width="27" height="28" viewBox="0 0 27 28"><rect x="0.5" y="0.5" width="20" height="25.5" fill="#fff" stroke="#b3bfcc"/><rect x="1.5" y="1.5" width="18" height="23.5" fill="#f7f9fb"/><path d="M3 6.0H4 M6 6.0H17" stroke="#c0c8d2" stroke-width="0.8"/><path d="M3 9.3H4 M6 9.3H17" stroke="#c0c8d2" stroke-width="0.8"/><path d="M3 12.6H4 M6 12.6H17" stroke="#c0c8d2" stroke-width="0.8"/><path d="M3 15.899999999999999H4 M6 15.899999999999999H17" stroke="#c0c8d2" stroke-width="0.8"/><path d="M3 19.2H4 M6 19.2H17" stroke="#c0c8d2" stroke-width="0.8"/><circle cx="18.5" cy="21" r="5.8" fill="#a8dba8" stroke="#6db46d" stroke-width="0.9"/><path d="M18.5 17.5V24.5M15 21H22" stroke="#fff" stroke-width="1.8"/></svg>
<svg class="r" style="left:310px;top:123.5px" width="7" height="17" viewBox="0 0 7 17"><rect x="0.5" y="0.5" width="6" height="16" fill="#bfd6f5" stroke="#6f9ee0" stroke-width="0.8"/><path d="M0 6H7M0 11H7" stroke="#6f9ee0" stroke-width="0.8"/></svg>
<svg class="r" style="left:196.25px;top:184.5px" width="14" height="14" viewBox="0 0 14 14"><path d="M0.5 0.9 H12.6 L8.3 6.3 V13.3 L4.8 11.3 V6.3 Z" fill="#c6e1fa"/></svg>
<svg class="r" style="left:314.75px;top:184.5px" width="14" height="14" viewBox="0 0 14 14"><path d="M0.5 0.9 H12.6 L8.3 6.3 V13.3 L4.8 11.3 V6.3 Z" fill="#c6e1fa"/></svg>
<svg class="r" style="left:445.25px;top:184.5px" width="14" height="14" viewBox="0 0 14 14"><path d="M0.5 0.9 H12.6 L8.3 6.3 V13.3 L4.8 11.3 V6.3 Z" fill="#c6e1fa"/></svg>
<svg class="r" style="left:580.0px;top:184.5px" width="14" height="14" viewBox="0 0 14 14"><path d="M0.5 0.9 H12.6 L8.3 6.3 V13.3 L4.8 11.3 V6.3 Z" fill="#c6e1fa"/></svg>
<svg class="r" style="left:597px;top:185.0px" width="13" height="13" viewBox="0 0 13 13"><circle cx="6.5" cy="6.5" r="6" fill="#8ab4ed"/><path d="M4.8 4.9 C4.8 3.5,5.6 2.9,6.6 2.9 C7.6 2.9,8.3 3.6,8.3 4.5 C8.3 5.8,6.9 6,6.9 7.5 V8.2" stroke="#fff" stroke-width="1" fill="none"/><rect x="6.2" y="9.1" width="1.4" height="1.4" fill="#fff"/></svg>
<svg class="r" style="left:697.25px;top:184.5px" width="14" height="14" viewBox="0 0 14 14"><path d="M0.5 0.9 H12.6 L8.3 6.3 V13.3 L4.8 11.3 V6.3 Z" fill="#c6e1fa"/></svg>
<svg class="r" style="left:713.5px;top:185.0px" width="13" height="13" viewBox="0 0 13 13"><circle cx="6.5" cy="6.5" r="6" fill="#8ab4ed"/><path d="M4.8 4.9 C4.8 3.5,5.6 2.9,6.6 2.9 C7.6 2.9,8.3 3.6,8.3 4.5 C8.3 5.8,6.9 6,6.9 7.5 V8.2" stroke="#fff" stroke-width="1" fill="none"/><rect x="6.2" y="9.1" width="1.4" height="1.4" fill="#fff"/></svg>
<svg class="r" style="left:818.25px;top:184.5px" width="14" height="14" viewBox="0 0 14 14"><path d="M0.5 0.9 H12.6 L8.3 6.3 V13.3 L4.8 11.3 V6.3 Z" fill="#c6e1fa"/></svg>
<svg class="r" style="left:834.5px;top:185.0px" width="13" height="13" viewBox="0 0 13 13"><circle cx="6.5" cy="6.5" r="6" fill="#8ab4ed"/><path d="M4.8 4.9 C4.8 3.5,5.6 2.9,6.6 2.9 C7.6 2.9,8.3 3.6,8.3 4.5 C8.3 5.8,6.9 6,6.9 7.5 V8.2" stroke="#fff" stroke-width="1" fill="none"/><rect x="6.2" y="9.1" width="1.4" height="1.4" fill="#fff"/></svg>
<svg class="r" style="left:933.75px;top:184.5px" width="14" height="14" viewBox="0 0 14 14"><path d="M0.5 0.9 H12.6 L8.3 6.3 V13.3 L4.8 11.3 V6.3 Z" fill="#c6e1fa"/></svg>
<svg class="r" style="left:949.5px;top:185.0px" width="13" height="13" viewBox="0 0 13 13"><circle cx="6.5" cy="6.5" r="6" fill="#8ab4ed"/><path d="M4.8 4.9 C4.8 3.5,5.6 2.9,6.6 2.9 C7.6 2.9,8.3 3.6,8.3 4.5 C8.3 5.8,6.9 6,6.9 7.5 V8.2" stroke="#fff" stroke-width="1" fill="none"/><rect x="6.2" y="9.1" width="1.4" height="1.4" fill="#fff"/></svg>
<div class="r" style="left:1px;top:417.5px;width:998px;height:251.5px;background:#fff"></div>
<div class="r" style="left:721px;top:229px;width:278px;height:92px;background:#fff"></div>
<div class="r" style="left:649px;top:253px;width:160px;height:168px;background:#fff;border:1px solid #9b4aa6;border-right:2px solid #7a4a8a"></div>
<div class="r" style="left:650px;top:254px;width:157px;height:23px;background:#f5f5f5"></div>
<div class="r" style="left:650px;top:277px;width:157px;height:1px;background:#dde5eb"></div>
<div class="t" style="left:660px;top:260.47px;font-size:10.67px;font-weight:normal;color:#22801f;font-style:normal;">všetky</div>
<div class="r" style="left:651px;top:276px;width:100px;height:25px;border:4px solid #3b3fc4;background:#fff"></div>
<div class="t" style="left:660px;top:282.97px;font-size:10.67px;font-weight:normal;color:#9b3fd0;font-style:normal;">Výber</div>
<div class="t" style="left:659.5px;top:306.27px;font-size:10.9px;font-weight:normal;color:#222;font-style:normal;">Školský účet</div>
<div class="t" style="left:677.5px;top:329.97px;font-size:10.9px;font-weight:normal;color:#222;font-style:normal;">ŠKD</div>
<div class="t" style="left:659.5px;top:352.27px;font-size:10.9px;font-weight:normal;color:#222;font-style:normal;">Účet školskej jedálne</div>
<div class="t" style="left:677.5px;top:375.77px;font-size:10.9px;font-weight:normal;color:#222;font-style:normal;">Strava - zamestnanci</div>
<div class="t" style="left:677.5px;top:398.97px;font-size:10.9px;font-weight:normal;color:#222;font-style:normal;">Strava - žiaci</div>
<div class="r" style="left:646px;top:224.5px;width:75.5px;height:28.5px;border:4px solid #9b4aa6;background:#fff"></div>
<div class="t" style="left:652px;top:227.47px;font-size:10.67px;font-weight:bold;color:#000;font-style:normal;">Predpisy:</div>
<div class="t" style="left:652px;top:239.47px;font-size:10.67px;font-weight:normal;color:#22801f;font-style:normal;">všetky</div>
<div class="t" style="left:726px;top:230.04px;font-size:19.8px;font-weight:bold;color:#a04aa8;font-style:italic;">výber konkrétneho predpisu</div>
<div class="t" style="left:827px;top:255.24px;font-size:19.8px;font-weight:bold;color:#a04aa8;font-style:italic;">alebo bank. účtu</div>
<div class="r" style="left:785.5px;top:321px;width:211.5px;height:207px;border:1.5px solid #4b4fd0;background:#fff"></div>
<div class="r" style="left:788px;top:324px;width:207px;height:202px;background:#fff;box-shadow:1px 1px 3px rgba(0,0,0,.35);border-radius:4px"></div>
<div class="r" style="left:788px;top:324px;width:207px;height:23px;background:#3f5765;border-radius:4px 4px 0 0"></div>
<div class="t" style="left:799px;top:330.86px;font-size:10.8px;font-weight:bold;color:#fff;font-style:normal;">Predpisy - Výber viacerých</div>
<svg class="r" style="left:978px;top:331px" width="10" height="10" viewBox="0 0 10 10"><path d="M1.3 1.3L8.7 8.7M8.7 1.3L1.3 8.7" stroke="#fff" stroke-width="2.6"/></svg>
<div class="r" style="left:799px;top:355px;width:74px;height:16px;border:1px solid #8d8d8d;background:#efefef;border-radius:2px"></div>
<div class="t" style="left:636px;width:400px;text-align:center;top:358.47px;font-size:10.67px;font-weight:normal;color:#000;font-style:normal;">Vyber všetko</div>
<div class="r" style="left:873px;top:355px;width:69px;height:16px;border:1px solid #8d8d8d;background:#efefef;border-radius:2px"></div>
<div class="t" style="left:707.5px;width:400px;text-align:center;top:358.47px;font-size:10.67px;font-weight:normal;color:#000;font-style:normal;">Zruš všetko</div>
<div class="r" style="left:802px;top:375px;width:11px;height:11px;border:1px solid #767676;border-radius:2px;background:#fff"></div>
<div class="t" style="left:817.5px;top:375.97px;font-size:10.67px;font-weight:normal;color:#333;font-style:normal;">Školský účet</div>
<div class="r" style="left:820px;top:393px;width:11px;height:11px;border:1px solid #767676;border-radius:2px;background:#fff"></div>
<div class="t" style="left:835px;top:394.97px;font-size:10.67px;font-weight:normal;color:#333;font-style:normal;">ŠKD</div>
<div class="r" style="left:804px;top:416px;width:11px;height:11px;background:#0b6cf0;border-radius:2px"></div>
<svg class="r" style="left:804px;top:416px" width="11" height="11" viewBox="0 0 11 11"><path d="M2.3 5.8L4.5 8L8.8 3" stroke="#fff" stroke-width="1.8" fill="none"/></svg>
<div class="t" style="left:819.5px;top:417.97px;font-size:10.67px;font-weight:normal;color:#333;font-style:normal;">Účet školskej jedálne</div>
<div class="r" style="left:822px;top:435px;width:11px;height:11px;background:#0b6cf0;border-radius:2px"></div>
<svg class="r" style="left:822px;top:435px" width="11" height="11" viewBox="0 0 11 11"><path d="M2.3 5.8L4.5 8L8.8 3" stroke="#fff" stroke-width="1.8" fill="none"/></svg>
<div class="t" style="left:837px;top:435.97px;font-size:10.67px;font-weight:normal;color:#333;font-style:normal;">Strava - zamestnanci</div>
<div class="r" style="left:822px;top:461px;width:11px;height:11px;background:#0b6cf0;border-radius:2px"></div>
<svg class="r" style="left:822px;top:461px" width="11" height="11" viewBox="0 0 11 11"><path d="M2.3 5.8L4.5 8L8.8 3" stroke="#fff" stroke-width="1.8" fill="none"/></svg>
<div class="t" style="left:837px;top:461.97px;font-size:10.67px;font-weight:normal;color:#333;font-style:normal;">Strava - žiaci</div>
<div class="r" style="left:870px;top:487px;width:48px;height:26px;background:#4cae4c;border:1px solid #449d44;border-radius:1px"></div>
<div class="t" style="left:694px;width:400px;text-align:center;top:494.80px;font-size:10.4px;font-weight:bold;color:#fff;font-style:normal;letter-spacing:-0.35px">Uložiť</div>
<div class="r" style="left:920px;top:487px;width:56px;height:27px;background:#428bca;border:1px solid #357ebd;border-radius:1px"></div>
<div class="t" style="left:748.5px;width:400px;text-align:center;top:494.80px;font-size:10.4px;font-weight:bold;color:#fff;font-style:normal;letter-spacing:-0.35px">Zatvoriť</div>
<svg class="r" style="left:0;top:0" width="1001" height="671"><path d="M391 151 Q470 211 646 232" stroke="#9b4aa6" stroke-width="3" fill="none"/><path d="M632.5 217.5 L647.5 232.5 L626 236.5" stroke="#9b4aa6" stroke-width="3" fill="none"/><path d="M752 290 L793 320" stroke="#3b3fc4" stroke-width="3" fill="none"/><path d="M782 301.5 L793.5 320.5 L775 312" stroke="#3b3fc4" stroke-width="3" fill="none"/></svg>
<div class="t" style="left:130px;top:354.84px;font-size:19.8px;font-weight:bold;color:#e8151b;font-style:italic;">pre generovanie</div>
<div class="t" style="left:169.5px;top:378.24px;font-size:19.8px;font-weight:bold;color:#e8151b;font-style:italic;">súboru</div>
<div class="r" style="left:8px;top:419px;width:107px;height:38px;background:#2b5b86"></div>
<div class="r" style="left:11px;top:421px;width:34px;height:36px;background:#b9d3e3"></div>
<div class="r" style="left:179px;top:417px;width:49px;height:43px;border:4px solid #e8151b"></div>
<div class="t" style="left:311px;top:426.17px;font-size:10.67px;font-weight:bold;color:#000;font-style:normal;">Predpisy:</div>
<div class="t" style="left:311px;top:438.47px;font-size:10.67px;font-weight:normal;color:#000;font-style:normal;">Účet školskej jedálne</div>
<div class="t" style="left:433px;top:424.17px;font-size:10.67px;font-weight:bold;color:#000;font-style:normal;">Obdobie:</div>
<div class="r" style="left:433px;top:435.5px;width:82px;height:17.5px;border:1px solid #8a8a8a;background:#fff;border-radius:1px"></div>
<div class="t" style="left:112px;width:400px;text-align:right;top:439.97px;font-size:10.67px;font-weight:normal;color:#888;font-style:normal;">Od</div>
<div class="t" style="left:519px;top:438.97px;font-size:10.67px;font-weight:normal;color:#000;font-style:normal;">-</div>
<div class="r" style="left:526px;top:435px;width:81px;height:16px;border:1px solid #444;background:#fff"></div>
<div class="t" style="left:204px;width:400px;text-align:right;top:439.47px;font-size:10.67px;font-weight:normal;color:#000;font-style:normal;">30.6.2024</div>
<div class="t" style="left:623px;top:438.27px;font-size:10.67px;font-weight:normal;color:#3e72a8;font-style:normal;">Dátum prijatia</div>
<svg class="r" style="left:692px;top:442px" width="8" height="5" viewBox="0 0 8 5"><path d="M0 0L8 0L4 5Z" fill="#bdbdbd"/></svg>
<div class="r" style="left:9px;top:471.5px;width:744px;height:60px;background:#2c5d88"></div>
<div class="r" style="left:0px;top:457px;width:198px;height:25px;background:#fff"></div>
<div class="t" style="left:8.5px;top:458.50px;font-size:19.96px;font-weight:bold;color:#e8151b;font-style:italic;">všetkých vyznačiť</div>
<div class="r" style="left:44px;top:482px;width:1px;height:49px;background:#c9d6e2"></div>
<div class="r" style="left:206px;top:471.5px;width:1px;height:60px;background:#c9d6e2"></div>
<div class="r" style="left:307px;top:471.5px;width:1px;height:60px;background:#c9d6e2"></div>
<div class="r" style="left:477px;top:471.5px;width:1px;height:60px;background:#c9d6e2"></div>
<div class="r" style="left:587px;top:471.5px;width:1px;height:60px;background:#c9d6e2"></div>
<div class="r" style="left:697px;top:471.5px;width:1px;height:60px;background:#c9d6e2"></div>
<div class="r" style="left:9px;top:531px;width:744px;height:19px;background:#fcebb4"></div>
<div class="r" style="left:9px;top:550px;width:744px;height:19px;background:#fcebb4"></div>
<div class="r" style="left:9px;top:569px;width:744px;height:19px;background:#fcebb4"></div>
<div class="r" style="left:9px;top:588px;width:744px;height:19px;background:#fcebb4"></div>
<div class="r" style="left:9px;top:607px;width:744px;height:19px;background:#fcebb4"></div>
<div class="r" style="left:9px;top:626px;width:744px;height:19px;background:#fcebb4"></div>
<div class="r" style="left:9px;top:550px;width:744px;height:1px;background:#dfe3df"></div>
<div class="r" style="left:9px;top:569px;width:744px;height:1px;background:#dfe3df"></div>
<div class="r" style="left:9px;top:588px;width:744px;height:1px;background:#dfe3df"></div>
<div class="r" style="left:9px;top:607px;width:744px;height:1px;background:#dfe3df"></div>
<div class="r" style="left:9px;top:626px;width:744px;height:1px;background:#dfe3df"></div>
<div class="r" style="left:9px;top:645px;width:744px;height:1px;background:#dfe3df"></div>
<div class="r" style="left:9px;top:531px;width:1px;height:115px;background:#dfe3df"></div>
<div class="r" style="left:44px;top:531px;width:1px;height:115px;background:#dfe3df"></div>
<div class="r" style="left:206px;top:531px;width:1px;height:115px;background:#dfe3df"></div>
<div class="r" style="left:307px;top:531px;width:1px;height:115px;background:#dfe3df"></div>
<div class="r" style="left:477px;top:531px;width:1px;height:115px;background:#dfe3df"></div>
<div class="r" style="left:587px;top:531px;width:1px;height:115px;background:#dfe3df"></div>
<div class="r" style="left:697px;top:531px;width:1px;height:115px;background:#dfe3df"></div>
<div class="r" style="left:1px;top:487px;width:44px;height:33px;border:4px solid #e8151b"></div>
<div class="r" style="left:21px;top:497px;width:11px;height:11px;background:#0b6cf0;border-radius:2px"></div>
<svg class="r" style="left:21px;top:497px" width="11" height="11" viewBox="0 0 11 11"><path d="M2.3 5.8L4.5 8L8.8 3" stroke="#fff" stroke-width="1.8" fill="none"/></svg>
<div class="t" style="left:-84px;width:400px;text-align:center;top:496.47px;font-size:10.67px;font-weight:bold;color:#fff;font-style:normal;">Používateľ</div>
<div class="t" style="left:47px;width:400px;text-align:center;top:496.47px;font-size:10.67px;font-weight:bold;color:#fff;font-style:normal;">Trieda</div>
<div class="r" style="left:267px;top:489px;width:16px;height:23px;background:#b9d3e3"></div>
<div class="r" style="left:212px;top:511px;width:90px;height:17px;background:#b9d3e3"></div>
<div class="r" style="left:215px;top:512px;width:85px;height:15px;border:1px solid #333;background:#fff;border-radius:2px"></div>
<div class="t" style="left:219px;top:514.47px;font-size:10.67px;font-weight:normal;color:#000;font-style:normal;">všetky</div>
<svg class="r" style="left:286px;top:516px" width="11" height="7" viewBox="0 0 11 7"><path d="M1 1L5.5 5.5L10 1" stroke="#111" stroke-width="2" fill="none"/></svg>
<div class="t" style="left:183px;width:400px;text-align:center;top:496.47px;font-size:10.67px;font-weight:bold;color:#fff;font-style:normal;">Účet</div>
<div class="r" style="left:441px;top:480px;width:29px;height:34px;background:#fff"></div>
<div class="t" style="left:442.5px;top:484.95px;font-size:22.5px;font-weight:bold;color:#e8151b;font-style:normal;">c)</div>
<div class="t" style="left:315px;width:400px;text-align:center;top:496.47px;font-size:10.67px;font-weight:bold;color:#fff;font-style:normal;">Kredit</div>
<div class="r" style="left:533px;top:490px;width:15px;height:22px;background:#b9d3e3"></div>
<div class="r" style="left:482px;top:511px;width:99px;height:20px;background:#b9d3e3"></div>
<div class="r" style="left:486px;top:513px;width:44px;height:17px;border:1px solid #666;background:#fff;border-radius:2px"></div>
<div class="t" style="left:127px;width:400px;text-align:right;top:516.97px;font-size:10.67px;font-weight:normal;color:#000;font-style:normal;">0.01</div>
<div class="t" style="left:531px;top:515.97px;font-size:10.67px;font-weight:normal;color:#000;font-style:normal;">-</div>
<div class="r" style="left:534px;top:513px;width:45px;height:17px;border:1px solid #666;background:#fff;border-radius:2px"></div>
<div class="t" style="left:176px;width:400px;text-align:right;top:516.97px;font-size:10.67px;font-weight:normal;color:#888;font-style:normal;">Do</div>
<div class="r" style="left:473px;top:487px;width:118px;height:50px;border:5px solid #f47a20"></div>
<div class="t" style="left:425px;width:400px;text-align:center;top:496.47px;font-size:10.67px;font-weight:bold;color:#fff;font-style:normal;">Poplatky</div>
<div class="t" style="left:702.5px;top:496.47px;font-size:10.67px;font-weight:bold;color:#fff;font-style:normal;">Prijaté platby</div>
<div class="r" style="left:21px;top:536px;width:11px;height:11px;background:#0b6cf0;border-radius:2px"></div>
<svg class="r" style="left:21px;top:536px" width="11" height="11" viewBox="0 0 11 11"><path d="M2.3 5.8L4.5 8L8.8 3" stroke="#fff" stroke-width="1.8" fill="none"/></svg>
<div class="t" style="left:48.8px;top:535.86px;font-size:10.8px;font-weight:normal;color:#3a6ea5;font-style:normal;">Antlová Žaneta</div>
<div class="t" style="left:57px;width:400px;text-align:center;top:535.97px;font-size:10.67px;font-weight:normal;color:#000;font-style:normal;">3.A</div>
<div class="t" style="left:312.5px;top:535.89px;font-size:10.76px;font-weight:normal;color:#000;font-style:normal;">SK19 1234 0000 0012 3456 7890</div>
<div class="t" style="left:183.5px;width:400px;text-align:right;top:535.97px;font-size:10.67px;font-weight:normal;color:#22801f;font-style:normal;">24</div>
<div class="t" style="left:293px;width:400px;text-align:right;top:535.97px;font-size:10.67px;font-weight:normal;color:#000;font-style:normal;">210,65</div>
<div class="r" style="left:21px;top:555px;width:11px;height:11px;background:#0b6cf0;border-radius:2px"></div>
<svg class="r" style="left:21px;top:555px" width="11" height="11" viewBox="0 0 11 11"><path d="M2.3 5.8L4.5 8L8.8 3" stroke="#fff" stroke-width="1.8" fill="none"/></svg>
<div class="t" style="left:48.8px;top:554.86px;font-size:10.8px;font-weight:normal;color:#3a6ea5;font-style:normal;">Aster Miloš</div>
<div class="t" style="left:57px;width:400px;text-align:center;top:554.97px;font-size:10.67px;font-weight:normal;color:#000;font-style:normal;">2.A</div>
<div class="t" style="left:312.5px;top:554.89px;font-size:10.76px;font-weight:normal;color:#000;font-style:normal;">SK88 0200 0000 0001 1155 5444</div>
<div class="t" style="left:183.5px;width:400px;text-align:right;top:554.97px;font-size:10.67px;font-weight:normal;color:#22801f;font-style:normal;">193,25</div>
<div class="t" style="left:293px;width:400px;text-align:right;top:554.97px;font-size:10.67px;font-weight:normal;color:#000;font-style:normal;">31,75</div>
<div class="r" style="left:21px;top:574px;width:11px;height:11px;background:#0b6cf0;border-radius:2px"></div>
<svg class="r" style="left:21px;top:574px" width="11" height="11" viewBox="0 0 11 11"><path d="M2.3 5.8L4.5 8L8.8 3" stroke="#fff" stroke-width="1.8" fill="none"/></svg>
<div class="t" style="left:48.8px;top:573.86px;font-size:10.8px;font-weight:normal;color:#3a6ea5;font-style:normal;">Bača Jozef</div>
<div class="t" style="left:57px;width:400px;text-align:center;top:573.97px;font-size:10.67px;font-weight:normal;color:#000;font-style:normal;">4.A</div>
<div class="t" style="left:183.5px;width:400px;text-align:right;top:573.97px;font-size:10.67px;font-weight:normal;color:#22801f;font-style:normal;">20</div>
<div class="t" style="left:293px;width:400px;text-align:right;top:573.97px;font-size:10.67px;font-weight:normal;color:#000;font-style:normal;">141,1</div>
<div class="r" style="left:21px;top:593px;width:11px;height:11px;background:#0b6cf0;border-radius:2px"></div>
<svg class="r" style="left:21px;top:593px" width="11" height="11" viewBox="0 0 11 11"><path d="M2.3 5.8L4.5 8L8.8 3" stroke="#fff" stroke-width="1.8" fill="none"/></svg>
<div class="t" style="left:48.8px;top:592.86px;font-size:10.8px;font-weight:normal;color:#3a6ea5;font-style:normal;">Borec Gregor</div>
<div class="t" style="left:57px;width:400px;text-align:center;top:592.97px;font-size:10.67px;font-weight:normal;color:#000;font-style:normal;">3.B</div>
<div class="t" style="left:183.5px;width:400px;text-align:right;top:592.97px;font-size:10.67px;font-weight:normal;color:#22801f;font-style:normal;">14,5</div>
<div class="t" style="left:293px;width:400px;text-align:right;top:592.97px;font-size:10.67px;font-weight:normal;color:#000;font-style:normal;">0,1</div>
<div class="r" style="left:21px;top:612px;width:11px;height:11px;background:#0b6cf0;border-radius:2px"></div>
<svg class="r" style="left:21px;top:612px" width="11" height="11" viewBox="0 0 11 11"><path d="M2.3 5.8L4.5 8L8.8 3" stroke="#fff" stroke-width="1.8" fill="none"/></svg>
<div class="t" style="left:48.8px;top:611.86px;font-size:10.8px;font-weight:normal;color:#3a6ea5;font-style:normal;">Kapustová Soňa</div>
<div class="t" style="left:57px;width:400px;text-align:center;top:611.97px;font-size:10.67px;font-weight:normal;color:#000;font-style:normal;">1.A</div>
<div class="t" style="left:312.5px;top:611.89px;font-size:10.76px;font-weight:normal;color:#000;font-style:normal;">SK64 0900 0000 0000 3333 2222</div>
<div class="t" style="left:183.5px;width:400px;text-align:right;top:611.97px;font-size:10.67px;font-weight:normal;color:#22801f;font-style:normal;">35,5</div>
<div class="t" style="left:293px;width:400px;text-align:right;top:611.97px;font-size:10.67px;font-weight:normal;color:#000;font-style:normal;">0</div>
<div class="r" style="left:21px;top:631px;width:11px;height:11px;background:#0b6cf0;border-radius:2px"></div>
<svg class="r" style="left:21px;top:631px" width="11" height="11" viewBox="0 0 11 11"><path d="M2.3 5.8L4.5 8L8.8 3" stroke="#fff" stroke-width="1.8" fill="none"/></svg>
<div class="t" style="left:48.8px;top:630.86px;font-size:10.8px;font-weight:normal;color:#3a6ea5;font-style:normal;">Karap Vladimír</div>
<div class="t" style="left:57px;width:400px;text-align:center;top:630.97px;font-size:10.67px;font-weight:normal;color:#000;font-style:normal;">9.A</div>
<div class="t" style="left:183.5px;width:400px;text-align:right;top:630.97px;font-size:10.67px;font-weight:normal;color:#22801f;font-style:normal;">3,05</div>
<div class="t" style="left:293px;width:400px;text-align:right;top:630.97px;font-size:10.67px;font-weight:normal;color:#000;font-style:normal;">207,45</div>
<div class="t" style="left:73px;width:400px;text-align:right;top:647.47px;font-size:10.67px;font-weight:bold;color:#000;font-style:normal;">Celkom:</div>
<div class="t" style="left:183px;width:400px;text-align:right;top:647.47px;font-size:10.67px;font-weight:bold;color:#000;font-style:normal;">351,1</div>
<div class="t" style="left:293px;width:400px;text-align:right;top:647.47px;font-size:10.67px;font-weight:bold;color:#000;font-style:normal;">671,75</div>
<div class="r" style="left:753px;top:516px;width:37px;height:1px;background:#e6e6e6"></div>
<svg class="r" style="left:15.5px;top:423px" width="25" height="29" viewBox="0 0 25 29"><g transform="scale(1.0)"><path d="M2 27.5 C2 21,7 19,12 19 C17 19,22 21,22 27.5 Z" fill="#86b3ea" stroke="#5f86c4" stroke-width="0.9"/><path d="M9 16 L9 19.5 C10 21.5,14 21.5,15 19.5 L15 16Z" fill="#e2b060"/><path d="M6.5 9 C6.5 3,17.5 3,17.5 9 L17.5 14 C17.5 18.5,14.5 20,12 20 C9.5 20,6.5 18.5,6.5 14Z" fill="#f3c978" stroke="#c99a4a" stroke-width="0.6"/><path d="M5.5 12 C4 4,8 0.8,12 0.8 C17 0.8,20 4,18.5 12 L17.5 12 C17.5 8,16 6.5,14 6.5 C11 6.5,8 7,6.5 12Z" fill="#a5663c"/></g></svg>
<svg class="r" style="left:46px;top:422px" width="31" height="31" viewBox="0 0 31 31"><path d="M1 22.5 C1 17.5,5 16,9.5 16 C14 16,17 17.5,17 22.5Z" fill="#f29aa8" stroke="#c4556a" stroke-width="0.9"/><path d="M4.5 8 C4.5 2,14 2,14 8 L14 12 C14 15.5,12 17,9.3 17 C6.5 17,4.5 15.5,4.5 12Z" fill="#f6cf8a"/><path d="M3.5 13 C2 3,7 0.5,10 0.5 C13 0.5,15.5 2,15.5 7 L12 6 C9 6,7 8,6 13Z" fill="#c87a45"/><path d="M7 30 C7 23.5,12 21.5,18 21.5 C24 21.5,29 23.5,29 30Z" fill="#b6e0b4" stroke="#2e8b3e" stroke-width="0.9"/><path d="M15 18.5 L15 22 C16 23.5,20 23.5,21 22 L21 18.5Z" fill="#e8c070"/><path d="M11.5 10 C11.5 3.5,24.5 3.5,24.5 10 L24.5 15 C24.5 20,21 22,18 22 C15 22,11.5 20,11.5 15Z" fill="#fbdb98" stroke="#e0b860" stroke-width="0.5"/><path d="M10.5 13 C9.5 5,13 2,18 2 C23 2,26.5 5,25.5 13 L24.5 12 C24.5 8,22 7,18 7 C14 7,12 8,11.5 13Z" fill="#f5d48e"/></svg>
<svg class="r" style="left:86px;top:424px" width="27" height="27" viewBox="0 0 27 27"><rect x="0.5" y="0.5" width="19.5" height="25.5" fill="#fff" stroke="#c9d1da"/><path d="M3 3.5H18" stroke="#eef0f3" stroke-width="0.8"/><rect x="3" y="10.0" width="1.2" height="1" fill="#7d8a99"/><rect x="3" y="12.8" width="1.2" height="1" fill="#7d8a99"/><rect x="3" y="15.6" width="1.2" height="1" fill="#7d8a99"/><rect x="3" y="18.4" width="1.2" height="1" fill="#7d8a99"/><circle cx="17.5" cy="21.3" r="6.2" fill="#7fa9e6" stroke="#4d78c0" stroke-width="0.9"/><text x="17.5" y="25.3" font-family="Liberation Sans" font-size="9" font-weight="bold" fill="#f5e3a0" text-anchor="middle">€</text></svg>
<svg class="r" style="left:126px;top:426.5px" width="28" height="22" viewBox="0 0 28 22"><rect x="0.5" y="0.5" width="23" height="17" fill="#fbe8a6" stroke="#d9bf6a"/><rect x="3.5" y="3.5" width="23.5" height="17.5" fill="#fbe8a6" stroke="#d9bf6a"/><path d="M3.5 4 L15.2 12 L27 4" stroke="#d9bf6a" stroke-width="0.9" fill="none"/></svg>
<svg class="r" style="left:157px;top:425.5px" width="30" height="28" viewBox="0 0 30 28"><path d="M0 3.5 L18 0 L18 27.5 L0 24Z" fill="#217346"/><rect x="16" y="3" width="13" height="21.5" fill="#217346"/><rect x="19" y="6.5" width="7.5" height="1.8" fill="#fff"/><rect x="19" y="10.3" width="7.5" height="1.8" fill="#fff"/><rect x="19" y="14.1" width="7.5" height="1.8" fill="#fff"/><rect x="19" y="17.9" width="7.5" height="1.8" fill="#fff"/><rect x="19" y="21.7" width="7.5" height="1.8" fill="#fff"/><path d="M3.8 8.5 L11.8 19.5 M11.8 8.5 L3.8 19.5" stroke="#fff" stroke-width="2.6"/></svg>
<svg class="r" style="left:191.5px;top:423px" width="33" height="29" viewBox="0 0 33 29"><path d="M13 0.5 L25.5 8 L0.5 8Z" fill="#8ab6f0" stroke="#8ab6f0" stroke-linejoin="round"/><rect x="0.5" y="7" width="25" height="3" fill="#8ab6f0"/><rect x="1.5" y="10" width="4" height="15" fill="#a4c8f7" stroke="#6f9ee0" stroke-width="0.6"/><rect x="20.5" y="10" width="4" height="15" fill="#a4c8f7" stroke="#6f9ee0" stroke-width="0.6"/><rect x="5.5" y="10" width="15" height="15" fill="#5f90dc"/><rect x="0" y="25" width="26" height="3" fill="#8ab6f0"/><text x="12.9" y="24.2" font-family="Liberation Sans" font-size="19" font-weight="normal" fill="#f2f2ea" text-anchor="middle">€</text><path d="M27 21.5H32L29.5 24.5Z" fill="#9aa3ad"/></svg>
<svg class="r" style="left:231px;top:426px" width="27" height="28" viewBox="0 0 27 28"><rect x="0.5" y="0.5" width="20" height="25.5" fill="#fff" stroke="#b3bfcc"/><rect x="1.5" y="1.5" width="18" height="23.5" fill="#f7f9fb"/><path d="M3 6.0H4 M6 6.0H17" stroke="#c0c8d2" stroke-width="0.8"/><path d="M3 9.3H4 M6 9.3H17" stroke="#c0c8d2" stroke-width="0.8"/><path d="M3 12.6H4 M6 12.6H17" stroke="#c0c8d2" stroke-width="0.8"/><path d="M3 15.899999999999999H4 M6 15.899999999999999H17" stroke="#c0c8d2" stroke-width="0.8"/><path d="M3 19.2H4 M6 19.2H17" stroke="#c0c8d2" stroke-width="0.8"/><circle cx="18.5" cy="21" r="5.8" fill="#a8dba8" stroke="#6db46d" stroke-width="0.9"/><path d="M18.5 17.5V24.5M15 21H22" stroke="#fff" stroke-width="1.8"/></svg>
<svg class="r" style="left:262px;top:424px" width="36" height="29" viewBox="0 0 36 29"><rect x="0.5" y="0.5" width="5.6" height="5.6" fill="#c2e2fb"/><rect x="6.1" y="0.5" width="5.6" height="5.6" fill="#ececec"/><rect x="11.7" y="0.5" width="5.6" height="5.6" fill="#c2e2fb"/><rect x="17.299999999999997" y="0.5" width="5.6" height="5.6" fill="#ececec"/><rect x="22.9" y="0.5" width="5.6" height="5.6" fill="#ececec"/><rect x="0.5" y="6.1" width="5.6" height="5.6" fill="#c2e2fb"/><rect x="6.1" y="6.1" width="5.6" height="5.6" fill="#ececec"/><rect x="11.7" y="6.1" width="5.6" height="5.6" fill="#c2e2fb"/><rect x="17.299999999999997" y="6.1" width="5.6" height="5.6" fill="#ececec"/><rect x="22.9" y="6.1" width="5.6" height="5.6" fill="#ececec"/><rect x="0.5" y="11.7" width="5.6" height="5.6" fill="#c2e2fb"/><rect x="6.1" y="11.7" width="5.6" height="5.6" fill="#ececec"/><rect x="11.7" y="11.7" width="5.6" height="5.6" fill="#c2e2fb"/><rect x="17.299999999999997" y="11.7" width="5.6" height="5.6" fill="#ececec"/><rect x="22.9" y="11.7" width="5.6" height="5.6" fill="#ececec"/><rect x="0.5" y="17.299999999999997" width="5.6" height="5.6" fill="#c2e2fb"/><rect x="6.1" y="17.299999999999997" width="5.6" height="5.6" fill="#ececec"/><rect x="11.7" y="17.299999999999997" width="5.6" height="5.6" fill="#c2e2fb"/><rect x="17.299999999999997" y="17.299999999999997" width="5.6" height="5.6" fill="#ececec"/><rect x="22.9" y="17.299999999999997" width="5.6" height="5.6" fill="#ececec"/><rect x="0.5" y="22.9" width="5.6" height="5.6" fill="#c2e2fb"/><rect x="6.1" y="22.9" width="5.6" height="5.6" fill="#ececec"/><rect x="11.7" y="22.9" width="5.6" height="5.6" fill="#c2e2fb"/><rect x="17.299999999999997" y="22.9" width="5.6" height="5.6" fill="#ececec"/><rect x="22.9" y="22.9" width="5.6" height="5.6" fill="#ececec"/><path d="M0.5 0.5V28.5" stroke="#7fa3d6" stroke-width="1"/><path d="M6.1 0.5V28.5" stroke="#7fa3d6" stroke-width="1"/><path d="M11.7 0.5V28.5" stroke="#7fa3d6" stroke-width="1"/><path d="M17.299999999999997 0.5V28.5" stroke="#7fa3d6" stroke-width="1"/><path d="M22.9 0.5V28.5" stroke="#a9bdd6" stroke-width="1"/><path d="M28.5 0.5V28.5" stroke="#a9bdd6" stroke-width="1"/><path d="M0.5 0.5H28.5" stroke="#a9bdd6" stroke-width="1"/><path d="M0.5 6.1H28.5" stroke="#a9bdd6" stroke-width="1"/><path d="M0.5 11.7H28.5" stroke="#a9bdd6" stroke-width="1"/><path d="M0.5 17.299999999999997H28.5" stroke="#a9bdd6" stroke-width="1"/><path d="M0.5 22.9H28.5" stroke="#a9bdd6" stroke-width="1"/><path d="M0.5 28.5H28.5" stroke="#a9bdd6" stroke-width="1"/><rect x="0.5" y="0.5" width="28" height="28" fill="none" stroke="#7f9cc0"/><path d="M30.5 22H35.5L33 25Z" fill="#9aa3ad"/></svg>
<svg class="r" style="left:148.25px;top:492px" width="14" height="14" viewBox="0 0 14 14"><path d="M0.5 0.9 H12.6 L8.3 6.3 V13.3 L4.8 11.3 V6.3 Z" fill="#c6e1fa"/></svg>
<svg class="r" style="left:268.75px;top:492.5px" width="14" height="14" viewBox="0 0 14 14"><path d="M0.5 0.9 H12.6 L8.3 6.3 V13.3 L4.8 11.3 V6.3 Z" fill="#d3e8fb" stroke="#8db4e0" stroke-width="0.8"/></svg>
<svg class="r" style="left:399.25px;top:492px" width="14" height="14" viewBox="0 0 14 14"><path d="M0.5 0.9 H12.6 L8.3 6.3 V13.3 L4.8 11.3 V6.3 Z" fill="#c6e1fa"/></svg>
<svg class="r" style="left:533.75px;top:493.5px" width="14" height="14" viewBox="0 0 14 14"><path d="M0.5 0.9 H12.6 L8.3 6.3 V13.3 L4.8 11.3 V6.3 Z" fill="#d3e8fb" stroke="#8db4e0" stroke-width="0.8"/></svg>
<svg class="r" style="left:551px;top:493.0px" width="13" height="13" viewBox="0 0 13 13"><circle cx="6.5" cy="6.5" r="6" fill="#8ab4ed"/><path d="M4.8 4.9 C4.8 3.5,5.6 2.9,6.6 2.9 C7.6 2.9,8.3 3.6,8.3 4.5 C8.3 5.8,6.9 6,6.9 7.5 V8.2" stroke="#fff" stroke-width="1" fill="none"/><rect x="6.2" y="9.1" width="1.4" height="1.4" fill="#fff"/></svg>
<svg class="r" style="left:651.25px;top:492px" width="14" height="14" viewBox="0 0 14 14"><path d="M0.5 0.9 H12.6 L8.3 6.3 V13.3 L4.8 11.3 V6.3 Z" fill="#c6e1fa"/></svg>
<svg class="r" style="left:667.5px;top:492.0px" width="13" height="13" viewBox="0 0 13 13"><circle cx="6.5" cy="6.5" r="6" fill="#8ab4ed"/><path d="M4.8 4.9 C4.8 3.5,5.6 2.9,6.6 2.9 C7.6 2.9,8.3 3.6,8.3 4.5 C8.3 5.8,6.9 6,6.9 7.5 V8.2" stroke="#fff" stroke-width="1" fill="none"/><rect x="6.2" y="9.1" width="1.4" height="1.4" fill="#fff"/></svg>
<div class="r" style="left:179px;top:417px;width:49px;height:43px;border:4px solid #e8151b"></div>
<div class="r" style="left:0px;top:0px;width:1.2px;height:670px;background:#555"></div>
<div class="r" style="left:999px;top:0px;width:1px;height:670px;background:#666"></div>
<div class="r" style="left:0px;top:669px;width:1000px;height:1px;background:#555"></div>
</body></html>
